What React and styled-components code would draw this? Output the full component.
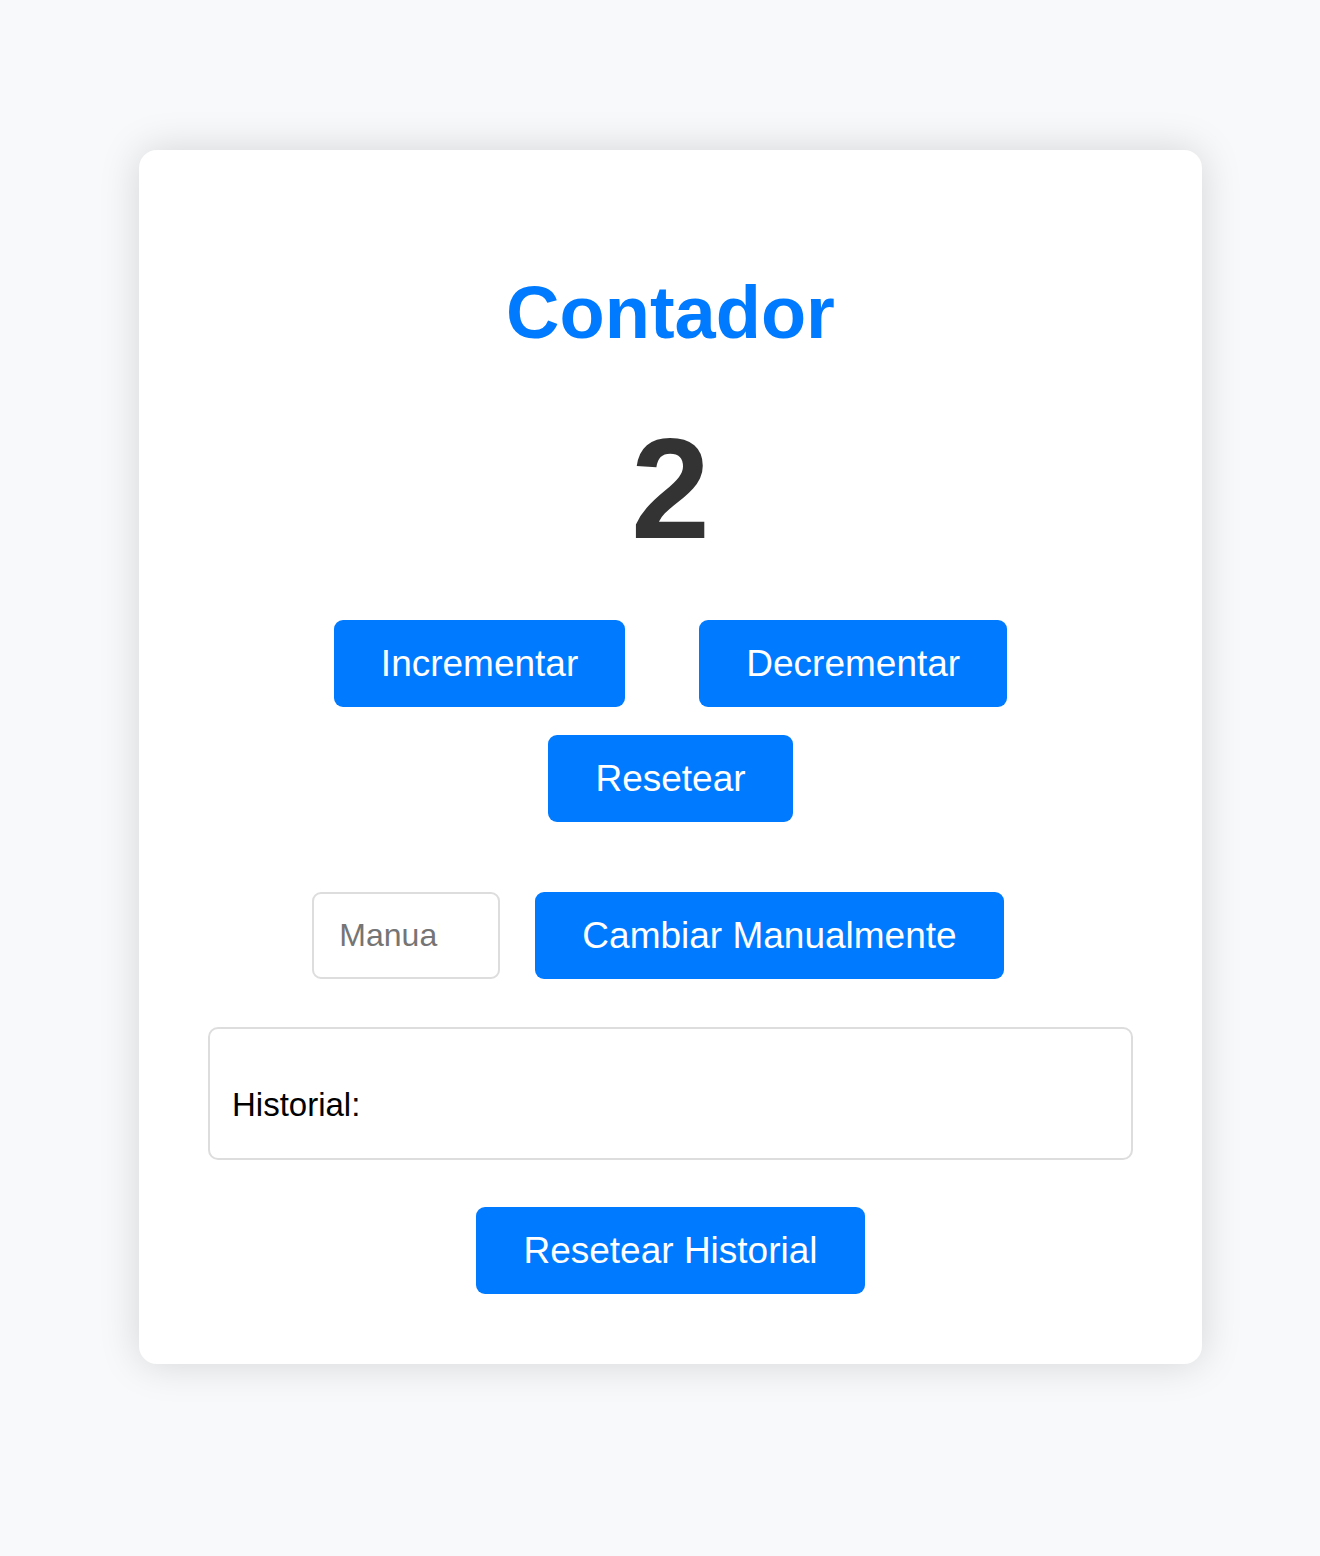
import React, { useState } from 'react'
import styled, { createGlobalStyle } from 'styled-components'

const GlobalStyle = createGlobalStyle`
  * {
    box-sizing: border-box;
  }
  body {
    margin: 0;
    background: #f8f9fa;
    font-family: 'Liberation Sans', Arial, sans-serif;
  }
`

const Page = styled.div`
  min-height: 1556px;
  padding: 150px 118px 192px 139px;
`

const Card = styled.div`
  background: #ffffff;
  border-radius: 18px;
  box-shadow: 0 0 40px rgba(0, 0, 0, 0.15);
  padding: 120px 69px 70px;
  text-align: center;
`

const Title = styled.h1`
  margin: 0;
  font-size: 74px;
  font-weight: 700;
  line-height: normal;
  color: #007bff;
`

const Count = styled.div`
  margin-top: 52px;
  font-size: 142px;
  font-weight: 700;
  line-height: normal;
  color: #333333;
`

const ButtonRow = styled.div`
  display: flex;
  flex-wrap: wrap;
  justify-content: center;
  column-gap: 74px;
  row-gap: 28px;
  margin-top: 49px;
`

const Button = styled.button`
  height: 87px;
  padding: 0 47px;
  border: none;
  border-radius: 9px;
  background: #007bff;
  color: #ffffff;
  font-family: 'Liberation Sans', Arial, sans-serif;
  font-size: 37px;
  line-height: 43px;
  cursor: pointer;
`

const ManualRow = styled.div`
  display: flex;
  justify-content: center;
  gap: 35px;
  margin-top: 70px;
  padding-right: 25px;
`

const ManualInput = styled.input`
  width: 188px;
  height: 87px;
  padding: 0 44px 0 25px;
  border: 2px solid #dddddd;
  border-radius: 9px;
  font-family: 'Liberation Sans', Arial, sans-serif;
  font-size: 32px;
  color: #333333;
  outline: none;

  &::placeholder {
    color: #757575;
  }
`

const HistoryBox = styled.div`
  margin-top: 48px;
  padding: 57px 22px 35px;
  border: 2px solid #dddddd;
  border-radius: 10px;
  text-align: left;
`

const HistoryLabel = styled.p`
  margin: 0;
  font-size: 33px;
  line-height: 37px;
  color: #000000;
`

const ResetHistoryRow = styled.div`
  display: flex;
  justify-content: center;
  margin-top: 47px;
`

export default function App() {
  const [count, setCount] = useState(2)
  const [manual, setManual] = useState('')
  const [history, setHistory] = useState([])

  const change = (next) => {
    setHistory((h) => [...h, next])
    setCount(next)
  }

  return (
    <>
      <GlobalStyle />
      <Page>
        <Card>
          <Title>Contador</Title>
          <Count>{count}</Count>
          <ButtonRow>
            <Button onClick={() => change(count + 1)}>Incrementar</Button>
            <Button onClick={() => change(count - 1)}>Decrementar</Button>
            <Button onClick={() => change(0)}>Resetear</Button>
          </ButtonRow>
          <ManualRow>
            <ManualInput
              type='number'
              placeholder='Manual'
              value={manual}
              onChange={(e) => setManual(e.target.value)}
            />
            <Button onClick={() => manual !== '' && change(Number(manual))}>
              Cambiar Manualmente
            </Button>
          </ManualRow>
          <HistoryBox>
            <HistoryLabel>Historial:{history.length > 0 ? ' ' + history.join(', ') : ''}</HistoryLabel>
          </HistoryBox>
          <ResetHistoryRow>
            <Button onClick={() => setHistory([])}>Resetear Historial</Button>
          </ResetHistoryRow>
        </Card>
      </Page>
    </>
  )
}
